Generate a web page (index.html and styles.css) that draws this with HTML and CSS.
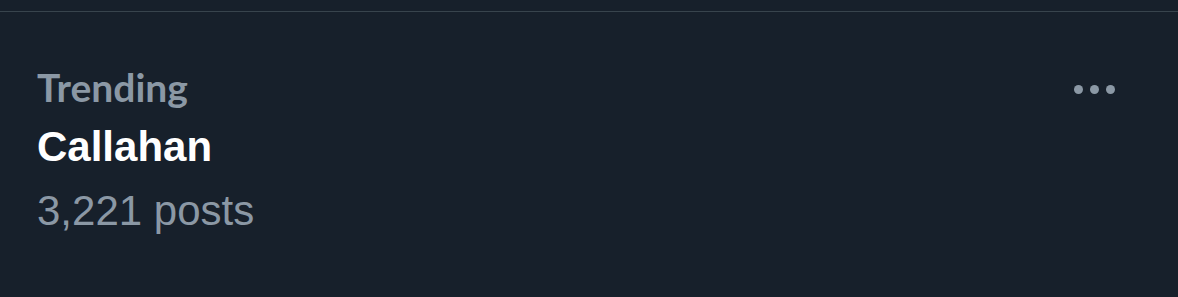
FILE: index.html
```html
<!DOCTYPE html>
<html lang="en">
<head>
    <meta charset="UTF-8">
    <title>Trending</title>
    <link rel="stylesheet" href="styles.css">
</head>
<body>
    <div class="top_border"></div>
    <div class="trend">
        <div class="trend_text">
            <div class="trend_label">Trending</div>
            <div class="trend_name">Callahan</div>
            <div class="trend_count">3,221 posts</div>
        </div>
        <button class="more" aria-label="More">
            <span class="dot"></span><span class="dot"></span><span class="dot"></span>
        </button>
    </div>
</body>
</html>
```

FILE: styles.css
```css
html,
body {
    margin: 0;
    height: 100%;
    background-color: #17202b;
}

.top_border {
    margin-top: 11px;
    height: 1px;
    background-color: #38444d;
}

.trend {
    display: flex;
    justify-content: space-between;
    align-items: flex-start;
    padding: 0 63px 0 37px;
}

.trend_label {
    margin-top: 55px;
    font-family: Lato, "Liberation Sans", sans-serif;
    font-weight: bold;
    font-size: 39px;
    line-height: 40px;
    color: #8b98a5;
}

.trend_name {
    margin-top: 16px;
    font-family: "Liberation Sans", Arial, sans-serif;
    font-weight: bold;
    font-size: 42px;
    line-height: 48px;
    color: #ffffff;
}

.trend_count {
    margin-top: 18px;
    font-family: "Liberation Sans", Arial, sans-serif;
    font-size: 42px;
    line-height: 44px;
    color: #8b98a5;
}

.more {
    margin-top: 73px;
    display: flex;
    gap: 7px;
    padding: 0;
    border: none;
    background: none;
}

.dot {
    width: 9px;
    height: 9px;
    border-radius: 50%;
    background-color: #8b98a5;
}
```
